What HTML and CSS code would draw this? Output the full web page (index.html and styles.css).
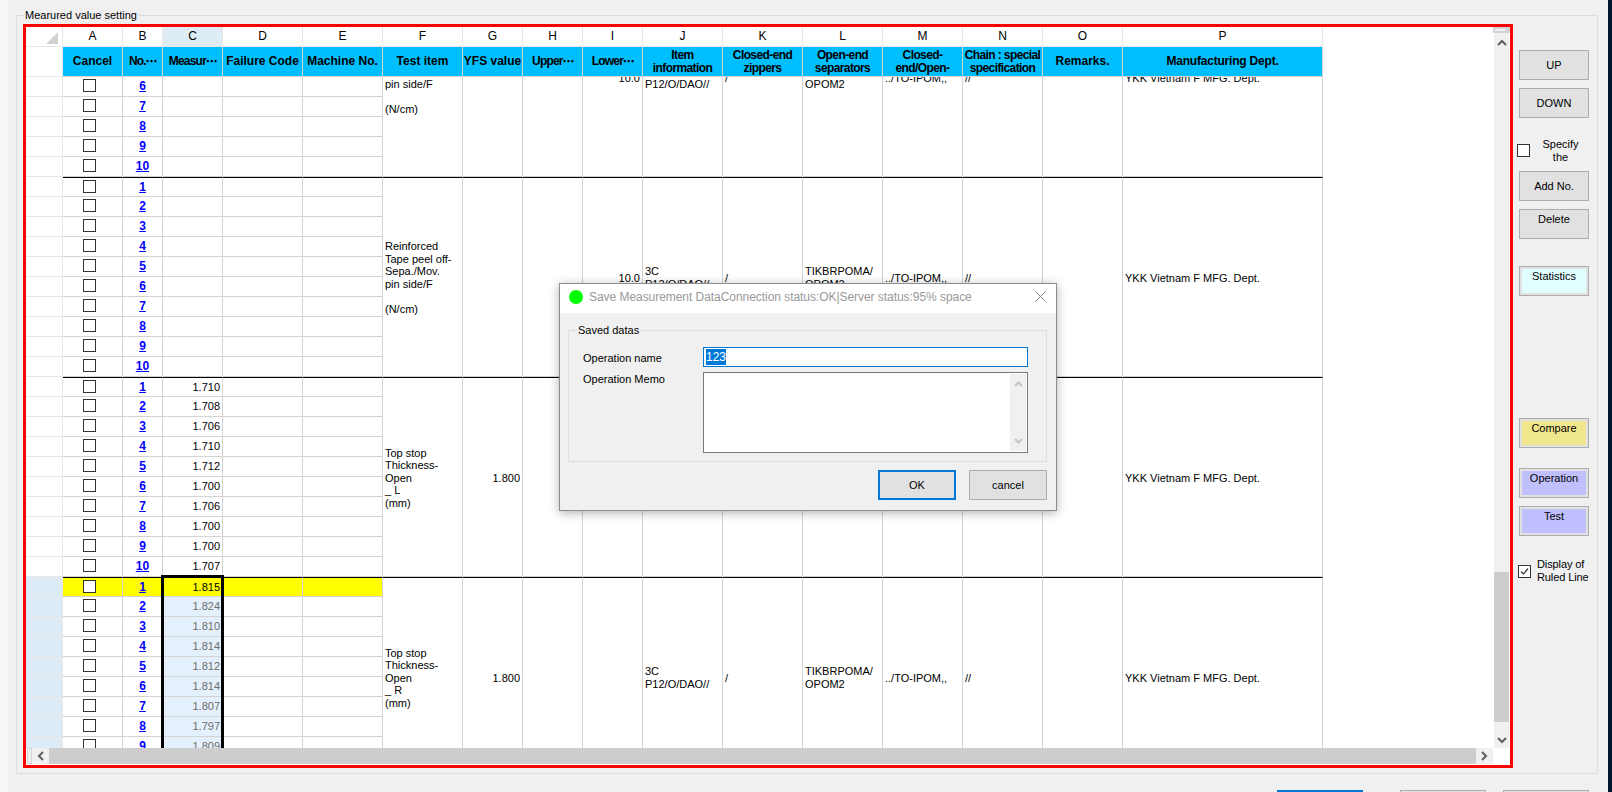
FILE: index.html
```html
<!DOCTYPE html>
<html lang="en">
<head>
    <meta charset="UTF-8">
    <title>Measured value setting</title>
    <link rel="stylesheet" href="styles.css">
</head>
<body>
<div class="window">
    <fieldset class="group">
        <legend>Mearured value setting</legend>
        <div class="group-body">

            <div class="sheet">
                <div class="pane">
                    <table class="grid">
                        <colgroup><col class="c-rh"><col class="c60"><col class="c40"><col class="c60"><col class="c80"><col class="c80"><col class="c80"><col class="c60"><col class="c60"><col class="c60"><col class="c80"><col class="c80"><col class="c80"><col class="c80"><col class="c80"><col class="c80"><col class="c200"></colgroup>
                        <tr class="letters">
                            <th class="corner"><svg width="12" height="12" viewBox="0 0 12 12"><path d="M12 0V12H0Z" fill="#d2d2d2"/></svg></th>
                            <th>A</th><th>B</th><th class="cur">C</th><th>D</th><th>E</th><th>F</th><th>G</th><th>H</th><th>I</th><th>J</th><th>K</th><th>L</th><th>M</th><th>N</th><th>O</th><th>P</th>
                        </tr>
                        <tr class="titles">
                            <th class="rh"></th>
                            <th>Cancel</th><th class="short">No.<span class="more">⋯</span></th><th class="short">Measur<span class="more">⋯</span></th><th>Failure Code</th><th>Machine No.</th><th>Test item</th><th>YFS value</th><th class="short">Upper<span class="more">⋯</span></th><th class="short">Lower<span class="more">⋯</span></th>
                            <th class="two">Item<br>information</th><th class="two">Closed-end<br>zippers</th><th class="two">Open-end<br>separators</th><th class="two">Closed-<br>end/Open-</th><th class="two">Chain : special<br>specification</th><th>Remarks.</th><th class="tight">Manufacturing Dept.</th>
                        </tr>
                    </table>

                    <div class="rows">
                        <table class="grid scrolled">
                            <colgroup><col class="c-rh"><col class="c60"><col class="c40"><col class="c60"><col class="c80"><col class="c80"><col class="c80"><col class="c60"><col class="c60"><col class="c60"><col class="c80"><col class="c80"><col class="c80"><col class="c80"><col class="c80"><col class="c80"><col class="c200"></colgroup>

                            <!-- Reinforced tape, first group -->
                            <tr class="first"><th class="rh"></th><td class="ck"><i class="box"></i></td><td class="no"><a href="#">1</a></td><td class="num"></td><td></td><td></td>
                                <td class="txt" rowspan="10">Reinforced<br>Tape peel off-<br>Sepa./Mov.<br>pin side/F<br><br>(N/cm)</td><td class="num" rowspan="10"></td><td class="num" rowspan="10"></td><td class="num" rowspan="10">10.0</td><td class="txt" rowspan="10">3C<br>P12/O/DAO//</td><td class="txt" rowspan="10">/</td><td class="txt" rowspan="10">TIKBRPOMA/<br>OPOM2</td><td class="txt" rowspan="10">../TO-IPOM,,</td><td class="txt" rowspan="10">//</td><td class="txt" rowspan="10"></td><td class="txt" rowspan="10">YKK Vietnam F MFG. Dept.</td></tr>
                            <tr><th class="rh"></th><td class="ck"><i class="box"></i></td><td class="no"><a href="#">2</a></td><td class="num"></td><td></td><td></td></tr>
                            <tr><th class="rh"></th><td class="ck"><i class="box"></i></td><td class="no"><a href="#">3</a></td><td class="num"></td><td></td><td></td></tr>
                            <tr><th class="rh"></th><td class="ck"><i class="box"></i></td><td class="no"><a href="#">4</a></td><td class="num"></td><td></td><td></td></tr>
                            <tr><th class="rh"></th><td class="ck"><i class="box"></i></td><td class="no"><a href="#">5</a></td><td class="num"></td><td></td><td></td></tr>
                            <tr><th class="rh"></th><td class="ck"><i class="box"></i></td><td class="no"><a href="#">6</a></td><td class="num"></td><td></td><td></td></tr>
                            <tr><th class="rh"></th><td class="ck"><i class="box"></i></td><td class="no"><a href="#">7</a></td><td class="num"></td><td></td><td></td></tr>
                            <tr><th class="rh"></th><td class="ck"><i class="box"></i></td><td class="no"><a href="#">8</a></td><td class="num"></td><td></td><td></td></tr>
                            <tr><th class="rh"></th><td class="ck"><i class="box"></i></td><td class="no"><a href="#">9</a></td><td class="num"></td><td></td><td></td></tr>
                            <tr><th class="rh"></th><td class="ck"><i class="box"></i></td><td class="no"><a href="#">10</a></td><td class="num"></td><td></td><td></td></tr>

                            <!-- Reinforced tape, second group -->
                            <tr class="first"><th class="rh"></th><td class="ck"><i class="box"></i></td><td class="no"><a href="#">1</a></td><td class="num"></td><td></td><td></td>
                                <td class="txt" rowspan="10">Reinforced<br>Tape peel off-<br>Sepa./Mov.<br>pin side/F<br><br>(N/cm)</td><td class="num" rowspan="10"></td><td class="num" rowspan="10"></td><td class="num" rowspan="10">10.0</td><td class="txt" rowspan="10">3C<br>P12/O/DAO//</td><td class="txt" rowspan="10">/</td><td class="txt" rowspan="10">TIKBRPOMA/<br>OPOM2</td><td class="txt" rowspan="10">../TO-IPOM,,</td><td class="txt" rowspan="10">//</td><td class="txt" rowspan="10"></td><td class="txt" rowspan="10">YKK Vietnam F MFG. Dept.</td></tr>
                            <tr><th class="rh"></th><td class="ck"><i class="box"></i></td><td class="no"><a href="#">2</a></td><td class="num"></td><td></td><td></td></tr>
                            <tr><th class="rh"></th><td class="ck"><i class="box"></i></td><td class="no"><a href="#">3</a></td><td class="num"></td><td></td><td></td></tr>
                            <tr><th class="rh"></th><td class="ck"><i class="box"></i></td><td class="no"><a href="#">4</a></td><td class="num"></td><td></td><td></td></tr>
                            <tr><th class="rh"></th><td class="ck"><i class="box"></i></td><td class="no"><a href="#">5</a></td><td class="num"></td><td></td><td></td></tr>
                            <tr><th class="rh"></th><td class="ck"><i class="box"></i></td><td class="no"><a href="#">6</a></td><td class="num"></td><td></td><td></td></tr>
                            <tr><th class="rh"></th><td class="ck"><i class="box"></i></td><td class="no"><a href="#">7</a></td><td class="num"></td><td></td><td></td></tr>
                            <tr><th class="rh"></th><td class="ck"><i class="box"></i></td><td class="no"><a href="#">8</a></td><td class="num"></td><td></td><td></td></tr>
                            <tr><th class="rh"></th><td class="ck"><i class="box"></i></td><td class="no"><a href="#">9</a></td><td class="num"></td><td></td><td></td></tr>
                            <tr><th class="rh"></th><td class="ck"><i class="box"></i></td><td class="no"><a href="#">10</a></td><td class="num"></td><td></td><td></td></tr>

                            <!-- Top stop, open L -->
                            <tr class="first"><th class="rh"></th><td class="ck"><i class="box"></i></td><td class="no"><a href="#">1</a></td><td class="num">1.710</td><td></td><td></td>
                                <td class="txt" rowspan="10">Top stop<br>Thickness-<br>Open<br>_ L<br>(mm)</td><td class="num" rowspan="10">1.800</td><td class="num" rowspan="10"></td><td class="num" rowspan="10"></td><td class="txt" rowspan="10">3C<br>P12/O/DAO//</td><td class="txt" rowspan="10">/</td><td class="txt" rowspan="10">TIKBRPOMA/<br>OPOM2</td><td class="txt" rowspan="10">../TO-IPOM,,</td><td class="txt" rowspan="10">//</td><td class="txt" rowspan="10"></td><td class="txt" rowspan="10">YKK Vietnam F MFG. Dept.</td></tr>
                            <tr><th class="rh"></th><td class="ck"><i class="box"></i></td><td class="no"><a href="#">2</a></td><td class="num">1.708</td><td></td><td></td></tr>
                            <tr><th class="rh"></th><td class="ck"><i class="box"></i></td><td class="no"><a href="#">3</a></td><td class="num">1.706</td><td></td><td></td></tr>
                            <tr><th class="rh"></th><td class="ck"><i class="box"></i></td><td class="no"><a href="#">4</a></td><td class="num">1.710</td><td></td><td></td></tr>
                            <tr><th class="rh"></th><td class="ck"><i class="box"></i></td><td class="no"><a href="#">5</a></td><td class="num">1.712</td><td></td><td></td></tr>
                            <tr><th class="rh"></th><td class="ck"><i class="box"></i></td><td class="no"><a href="#">6</a></td><td class="num">1.700</td><td></td><td></td></tr>
                            <tr><th class="rh"></th><td class="ck"><i class="box"></i></td><td class="no"><a href="#">7</a></td><td class="num">1.706</td><td></td><td></td></tr>
                            <tr><th class="rh"></th><td class="ck"><i class="box"></i></td><td class="no"><a href="#">8</a></td><td class="num">1.700</td><td></td><td></td></tr>
                            <tr><th class="rh"></th><td class="ck"><i class="box"></i></td><td class="no"><a href="#">9</a></td><td class="num">1.700</td><td></td><td></td></tr>
                            <tr><th class="rh"></th><td class="ck"><i class="box"></i></td><td class="no"><a href="#">10</a></td><td class="num">1.707</td><td></td><td></td></tr>

                            <!-- Top stop, open R: selected rows -->
                            <tr class="first current"><th class="rh picked"></th><td class="ck"><i class="box"></i></td><td class="no"><a href="#">1</a></td><td class="num">1.815</td><td></td><td></td>
                                <td class="txt" rowspan="10">Top stop<br>Thickness-<br>Open<br>_ R<br>(mm)</td><td class="num" rowspan="10">1.800</td><td class="num" rowspan="10"></td><td class="num" rowspan="10"></td><td class="txt" rowspan="10">3C<br>P12/O/DAO//</td><td class="txt" rowspan="10">/</td><td class="txt" rowspan="10">TIKBRPOMA/<br>OPOM2</td><td class="txt" rowspan="10">../TO-IPOM,,</td><td class="txt" rowspan="10">//</td><td class="txt" rowspan="10"></td><td class="txt" rowspan="10">YKK Vietnam F MFG. Dept.</td></tr>
                            <tr><th class="rh picked"></th><td class="ck"><i class="box"></i></td><td class="no"><a href="#">2</a></td><td class="num picked-cell">1.824</td><td></td><td></td></tr>
                            <tr><th class="rh picked"></th><td class="ck"><i class="box"></i></td><td class="no"><a href="#">3</a></td><td class="num picked-cell">1.810</td><td></td><td></td></tr>
                            <tr><th class="rh picked"></th><td class="ck"><i class="box"></i></td><td class="no"><a href="#">4</a></td><td class="num picked-cell">1.814</td><td></td><td></td></tr>
                            <tr><th class="rh picked"></th><td class="ck"><i class="box"></i></td><td class="no"><a href="#">5</a></td><td class="num picked-cell">1.812</td><td></td><td></td></tr>
                            <tr><th class="rh picked"></th><td class="ck"><i class="box"></i></td><td class="no"><a href="#">6</a></td><td class="num picked-cell">1.814</td><td></td><td></td></tr>
                            <tr><th class="rh picked"></th><td class="ck"><i class="box"></i></td><td class="no"><a href="#">7</a></td><td class="num picked-cell">1.807</td><td></td><td></td></tr>
                            <tr><th class="rh picked"></th><td class="ck"><i class="box"></i></td><td class="no"><a href="#">8</a></td><td class="num picked-cell">1.797</td><td></td><td></td></tr>
                            <tr><th class="rh picked"></th><td class="ck"><i class="box"></i></td><td class="no"><a href="#">9</a></td><td class="num picked-cell">1.809</td><td></td><td></td></tr>
                            <tr><th class="rh picked"></th><td class="ck"><i class="box"></i></td><td class="no"><a href="#">10</a></td><td class="num picked-cell"></td><td></td><td></td></tr>
                        </table>
                    </div>

                    <div class="cell-cursor"></div>
                </div>

                <div class="vbar">
                    <div class="vsplit"></div>
                    <div class="arrow-up"><svg width="10" height="7" viewBox="0 0 10 7"><path d="M1 6L5 2L9 6" fill="none" stroke="#606060" stroke-width="2"/></svg></div>
                    <div class="vgap"></div>
                    <div class="vthumb"></div>
                    <div class="arrow-down"><svg width="10" height="7" viewBox="0 0 10 7"><path d="M1 1L5 5L9 1" fill="none" stroke="#606060" stroke-width="2"/></svg></div>
                </div>

                <div class="hbar">
                    <div class="hsplit"></div>
                    <div class="arrow-side"><svg width="7" height="10" viewBox="0 0 7 10"><path d="M6 1L2 5L6 9" fill="none" stroke="#606060" stroke-width="2"/></svg></div>
                    <div class="hthumb"></div>
                    <div class="arrow-side"><svg width="7" height="10" viewBox="0 0 7 10"><path d="M1 1L5 5L1 9" fill="none" stroke="#606060" stroke-width="2"/></svg></div>
                </div>
                <div class="sheet-corner"></div>
            </div>

            <div class="side">
                <button class="btn">UP</button>
                <button class="btn">DOWN</button>
                <div class="check-row specify">
                    <i class="box"></i>
                    <span class="check-text center">Specify<br>the</span>
                </div>
                <button class="btn">Add No.</button>
                <button class="btn btn-top">Delete</button>
                <button class="btn btn-top cyan gap-stat">Statistics</button>
                <button class="btn btn-top khaki gap-compare">Compare</button>
                <button class="btn btn-top violet gap-oper">Operation</button>
                <button class="btn btn-top violet">Test</button>
                <div class="check-row ruled">
                    <i class="box"><svg width="11" height="11" viewBox="0 0 11 11"><path d="M2 5.5L4.5 8L9 2.5" fill="none" stroke="#444" stroke-width="1.3"/></svg></i>
                    <span class="check-text">Display of<br>Ruled Line</span>
                </div>
            </div>

        </div>
    </fieldset>

    <div class="footer">
        <div class="foot-btn primary"></div>
        <div class="foot-btn"></div>
        <div class="foot-btn last"></div>
    </div>

    <!-- Save dialog -->
    <div class="dialog">
        <div class="dlg-title">
            <span class="status-dot"></span>
            <span class="dlg-caption">Save Measurement DataConnection status:OK|Server status:95% space</span>
            <svg class="dlg-close" width="11" height="11" viewBox="0 0 11 11"><path d="M0.5 0.5L10.5 10.5M10.5 0.5L0.5 10.5" stroke="#808080" stroke-width="1"/></svg>
        </div>
        <div class="dlg-body">
            <fieldset class="dlg-group">
                <legend>Saved datas</legend>
                <div class="dlg-form">
                    <label class="dlg-label name">Operation name</label>
                    <div class="dlg-input"><span class="selected">123</span></div>
                    <label class="dlg-label">Operation Memo</label>
                    <div class="dlg-memo">
                        <div class="memo-bar">
                            <svg width="9" height="6" viewBox="0 0 9 6"><path d="M1 5L4.5 1.5L8 5" fill="none" stroke="#c4c4c4" stroke-width="2"/></svg>
                            <svg width="9" height="6" viewBox="0 0 9 6"><path d="M1 1L4.5 4.5L8 1" fill="none" stroke="#c4c4c4" stroke-width="2"/></svg>
                        </div>
                    </div>
                </div>
            </fieldset>
            <div class="dlg-actions">
                <button class="btn dlg-btn default">OK</button>
                <button class="btn dlg-btn">cancel</button>
            </div>
        </div>
    </div>
</div>
</body>
</html>
```

FILE: styles.css
```css
/* General */
html, body {
    margin: 0;
    height: 792px;
    overflow: hidden;
}

body {
    background: #00152e;
    font-family: "Liberation Sans", Arial, sans-serif;
    font-size: 11px;
    color: #000;
    border-left: 8px solid #f7f7f7;
    box-sizing: border-box;
}

.window {
    position: relative;
    width: 1600px;
    height: 792px;
    overflow: hidden;
    background: #f0f0f0;
}

/* Outer group box */
.group {
    margin: 8px 10px 0 8px;
    padding: 2px 0 0 6px;
    width: 1582px;
    height: 766px;
    box-sizing: border-box;
    border: 1px solid #dcdcdc;
    min-width: 0;
}

.group legend {
    margin-left: 1px;
    padding: 0 1px;
    height: 14px;
    line-height: 14px;
}

.group-body {
    display: flex;
}

/* Sheet with the red frame */
.sheet {
    width: 1490px;
    height: 744px;
    box-sizing: border-box;
    border: 3px solid #ff0000;
    background: #fff;
    display: grid;
    grid-template-columns: 1467px 17px;
    grid-template-rows: 721px 17px;
}

.pane {
    position: relative;
    overflow: hidden;
    display: flex;
    flex-direction: column;
}

.rows {
    flex: 1;
    overflow: hidden;
}

.grid {
    table-layout: fixed;
    border-collapse: separate;
    border-spacing: 0;
    width: 1297px;
}

.scrolled {
    margin-top: -100px;
}

.c-rh { width: 37px; }
.c40 { width: 40px; }
.c60 { width: 60px; }
.c80 { width: 80px; }
.c200 { width: 200px; }

.grid th,
.grid td {
    box-sizing: border-box;
    padding: 0;
    height: 20px;
    border-right: 1px solid #d3d3d3;
    border-bottom: 1px solid #d3d3d3;
    font-weight: normal;
    line-height: 12.6px;
}

/* merged cells sit a pixel lower */
.grid td[rowspan] {
    padding-top: 2px;
}

/* Column letters */
.letters th {
    font-size: 12px;
    border-color: #e6e6e6;
    text-align: center;
}

.letters .cur {
    background: #deecf6;
}

.corner {
    text-align: right !important;
    padding: 5px 4px 2px 0 !important;
    line-height: 0 !important;
}

/* Blue title row */
.titles th {
    height: 30px;
    background: #00bfff;
    font-size: 12px;
    font-weight: bold;
    text-align: center;
}

.titles .rh {
    background: #fff;
}

.titles .two {
    letter-spacing: -0.6px;
}

.titles .short {
    letter-spacing: -0.8px;
    white-space: nowrap;
    overflow: hidden;
}

.titles .tight {
    letter-spacing: -0.2px;
}

.more {
    font-family: "DejaVu Sans", sans-serif;
    font-size: 11px;
    line-height: 0;
}

.grid .rh {
    border-color: #e6e6e6;
    background: #fff;
}

.grid .picked {
    background: #dcebf5;
}

/* Data rows */
.first td {
    border-top: 1px solid #000;
}

.current td:nth-child(-n+6) {
    background: #ffff00;
}

.ck {
    vertical-align: top;
}

.box {
    display: block;
    box-sizing: border-box;
    width: 13px;
    height: 13px;
    border: 1px solid #333;
    background: #fff;
}

.ck .box {
    margin: 2px 0 0 20px;
}

.no {
    text-align: center;
    font-size: 12px;
}

.no a {
    color: #0000ff;
    font-weight: bold;
}

.num {
    text-align: right;
    padding-right: 2px !important;
}

.picked-cell {
    background: #e4f0fb;
    color: #6d6d6d;
}

.txt {
    padding-left: 2px !important;
    text-align: left;
}

/* Current cell rectangle, lies over the grid */
.cell-cursor {
    position: absolute;
    left: 135px;
    top: 548px;
    width: 63px;
    height: 200px;
    box-sizing: border-box;
    border: 3px solid #000;
}

/* Scrollbars */
.vbar {
    grid-row: 1;
    grid-column: 2;
    margin: 0 1px;
    background: #f0f0f0;
    display: flex;
    flex-direction: column;
}

.vsplit {
    height: 6px;
    box-sizing: border-box;
    margin: 0 -1px;
    background: #d4d4d4;
    border: 2px solid #d4d4d4;
    border-width: 2px 5px 2px 2px;
    box-shadow: inset 0 0 0 1px #f0f0f0;
}

.arrow-up {
    height: 18px;
    display: flex;
    align-items: center;
    justify-content: center;
}

.vgap {
    flex: 1;
}

.vthumb {
    height: 150px;
    background: #cdcdcd;
}

.arrow-down {
    height: 26px;
    box-sizing: border-box;
    padding-bottom: 4px;
    display: flex;
    align-items: flex-end;
    justify-content: center;
}

.hbar {
    grid-row: 2;
    grid-column: 1;
    display: flex;
    height: 16px;
}

.hsplit {
    width: 5px;
    margin-left: 1px;
    box-sizing: border-box;
    background: #f0f0f0;
    border: 1px solid #d4d4d4;
}

.arrow-side {
    width: 17px;
    background: #f0f0f0;
    display: flex;
    align-items: center;
    justify-content: center;
}

.hthumb {
    flex: 1;
    background: #cdcdcd;
}

.sheet-corner {
    grid-row: 2;
    grid-column: 2;
    background: #fff;
}

/* Side buttons */
.side {
    margin-left: 6px;
    padding-top: 26px;
    width: 70px;
    display: flex;
    flex-direction: column;
    gap: 8px;
}

.btn {
    width: 70px;
    height: 30px;
    padding: 0;
    box-sizing: border-box;
    border: 1px solid #adadad;
    background: #e1e1e1;
    font-family: inherit;
    font-size: 11px;
    color: #000;
}

.btn-top {
    padding-bottom: 10px;
}

.cyan,
.khaki,
.violet {
    box-shadow: inset 0 0 0 2px #e1e1e1;
}

.cyan { background: #e0ffff; }
.khaki { background: #f0e68c; }
.violet { background: #c0c0ff; }

.gap-stat { margin-top: 19px; }
.gap-compare { margin-top: 114px; }
.gap-oper { margin-top: 12px; }

.check-row {
    display: flex;
    line-height: 13px;
}

.check-text {
    display: block;
}

.center {
    flex: 1;
    text-align: center;
}

.specify {
    margin: 12px 0 0 -2px;
    width: 70px;
    height: 25px;
    align-items: center;
    gap: 4px;
}

.ruled {
    margin: 14px 0 0 -1px;
    width: 74px;
    align-items: center;
    gap: 6px;
}

.ruled .check-text {
    letter-spacing: -0.1px;
}

/* Footer buttons, cut off by the window edge */
.footer {
    margin-top: 16px;
    padding-left: 1269px;
    display: flex;
    gap: 37px;
}

.foot-btn {
    width: 86px;
    height: 30px;
    box-sizing: border-box;
    border: 1px solid #adadad;
    background: #e1e1e1;
}

.foot-btn.primary {
    border: 2px solid #0078d7;
}

.foot-btn.last {
    margin-left: -20px;
}

/* Dialog */
.dialog {
    position: absolute;
    left: 551px;
    top: 283px;
    width: 498px;
    height: 228px;
    box-sizing: border-box;
    border: 1px solid #8c8c8c;
    background: #f0f0f0;
    box-shadow: 0 2px 10px rgba(0, 0, 0, 0.3);
}

.dlg-title {
    height: 29px;
    box-sizing: border-box;
    background: #fff;
    display: flex;
    align-items: center;
    padding: 0 10px 4px 9px;
}

.status-dot {
    width: 14px;
    height: 14px;
    border-radius: 50%;
    background: #00ff00;
}

.dlg-caption {
    margin-left: 6px;
    flex: 1;
    font-size: 12px;
    color: #999;
    letter-spacing: -0.05px;
}

.dlg-body {
    padding: 10px 9px 0 8px;
}

.dlg-group {
    margin: 0;
    padding: 10px 19px 8px 14px;
    border: 1px solid #dcdcdc;
    min-width: 0;
}

.dlg-group legend {
    margin-left: -6px;
    padding: 0 1px;
    height: 14px;
    line-height: 14px;
}

.dlg-form {
    display: grid;
    grid-template-columns: 120px 325px;
    grid-template-rows: 20px 81px;
    row-gap: 5px;
}

.dlg-label {
    line-height: 14px;
}

.dlg-label.name {
    padding-top: 4px;
}

.dlg-input {
    box-sizing: border-box;
    border: 1px solid #0078d7;
    background: #fff;
    line-height: 18px;
    font-size: 12px;
    padding-left: 2px;
}

.selected {
    background: #0078d7;
    color: #fff;
    display: inline-block;
    height: 16px;
    line-height: 16px;
    margin-top: 1px;
}

.dlg-memo {
    box-sizing: border-box;
    border: 1px solid #7a7a7a;
    background: #fff;
    display: flex;
    justify-content: flex-end;
    padding: 1px;
}

.memo-bar {
    width: 16px;
    background: #f0f0f0;
    display: flex;
    flex-direction: column;
    align-items: center;
    justify-content: space-between;
    padding: 7px 0;
    box-sizing: border-box;
}

.dlg-actions {
    margin-top: 8px;
    display: flex;
    justify-content: flex-end;
    gap: 13px;
}

.dlg-btn {
    width: 78px;
}

.default {
    border: 2px solid #0078d7;
}
```
